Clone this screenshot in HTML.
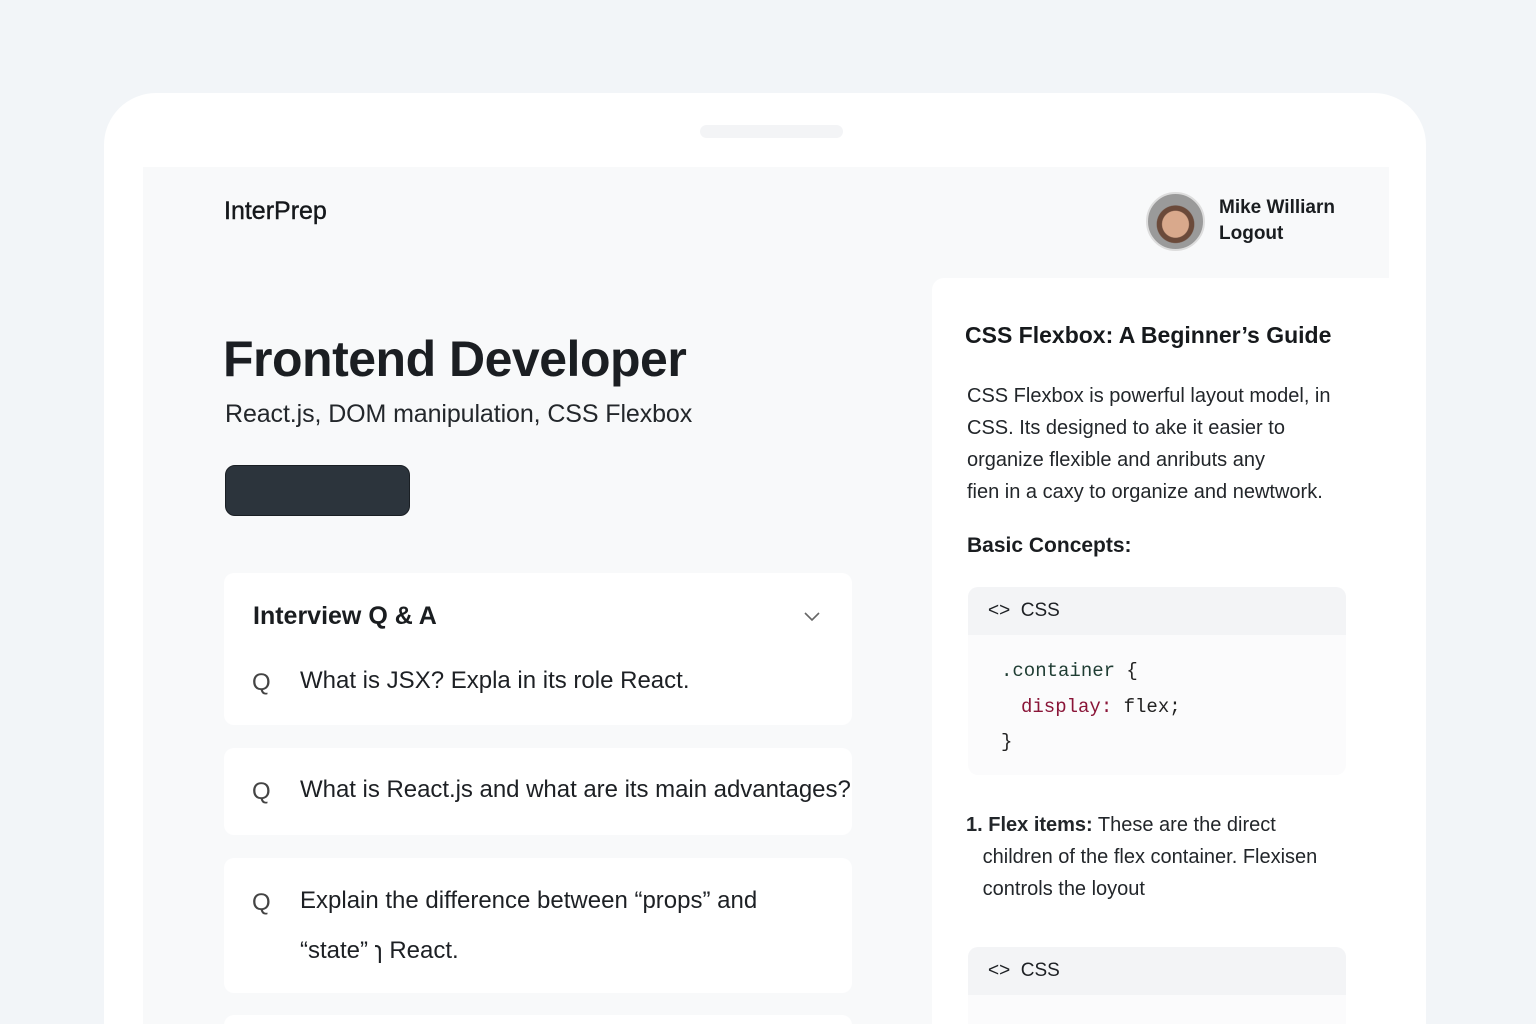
<!DOCTYPE html>
<html><head><meta charset="utf-8"><style>
*{margin:0;padding:0;box-sizing:border-box}
html,body{width:1536px;height:1024px;overflow:hidden}
body{background:#f2f5f8;font-family:"Liberation Sans",sans-serif;color:#1c1f23;position:relative}
.a{position:absolute;white-space:nowrap}
.frame{position:absolute;left:104px;top:93px;width:1322px;height:931px;background:#fff;border-radius:52px 52px 0 0}
.inner{position:absolute;left:143px;top:167px;width:1246px;height:857px;background:#f8f9fa}
.card{position:absolute;left:224px;width:628px;background:#fff;border-radius:10px}
.q{font-size:24px;color:#1d2024;letter-spacing:0}
.qi{font-size:24px;color:#444}
.code{position:absolute;left:968px;width:378px;border-radius:10px;background:#fbfbfc}
.codeh{height:48px;background:#f3f4f6;border-radius:10px 10px 0 0;font-size:19px;padding:13px 0 0 20px;color:#1d2024}
.mono{font-family:"Liberation Mono",monospace;font-size:19px}
.p{font-size:20px;line-height:32px;color:#22262a}
</style></head><body>
<div class="frame"></div>
<div class="a" style="left:700px;top:125px;width:143px;height:13px;border-radius:7px;background:#f3f4f6"></div>
<div class="inner"></div>
<div class="a" style="left:932px;top:278px;width:457px;height:746px;background:#fff;border-radius:12px 0 0 0"></div>

<div class="a" style="left:224px;top:197px;font-size:25px;color:#15181b;-webkit-text-stroke:0.4px #15181b">InterPrep</div>
<div class="a" style="left:1146px;top:192px;width:59px;height:59px;border-radius:50%;background:radial-gradient(circle at 50% 55%,#d9a98c 0 32%,#6b4a3a 34% 45%,#9a9a9a 47%);border:2px solid #ddd"></div>
<div class="a" style="left:1219px;top:195px;font-size:19px;font-weight:bold;color:#1a1d20;line-height:26px">Mike Williarn<br>Logout</div>

<div class="a" style="left:223px;top:330px;font-size:50px;font-weight:bold;color:#1b1e22;letter-spacing:-0.5px">Frontend Developer</div>
<div class="a" style="left:225px;top:400px;font-size:25px;color:#23272b;letter-spacing:-0.1px">React.js, DOM manipulation, CSS Flexbox</div>
<div class="a" style="left:225px;top:465px;width:185px;height:51px;background:#2c343c;border-radius:10px;border:1px solid #1a1f24"></div>

<div class="card" style="top:573px;height:152px"></div>
<div class="a" style="left:253px;top:602px;font-size:25px;font-weight:bold;color:#1a1d20">Interview Q &amp; A</div>
<svg class="a" style="left:803px;top:610px" width="18" height="12"><path d="M2 3l7 7 7-7" stroke="#666" stroke-width="1.6" fill="none"/></svg>
<div class="a qi" style="left:252px;top:669px">Q</div>
<div class="a q" style="left:300px;top:667px">What is JSX? Expla in its role React.</div>

<div class="card" style="top:748px;height:87px"></div>
<div class="a qi" style="left:252px;top:778px">Q</div>
<div class="a q" style="left:300px;top:776px;letter-spacing:-0.03px">What is React.js and what are its main advantages?</div>

<div class="card" style="top:858px;height:135px"></div>
<div class="a qi" style="left:252px;top:889px">Q</div>
<div class="a q" style="left:300px;top:887px">Explain the difference between “props” and</div>
<div class="a q" style="left:300px;top:937px">“state” ɿ React.</div>
<div class="card" style="top:1015px;height:20px"></div>

<div class="a" style="left:965px;top:322px;font-size:23px;font-weight:bold;color:#16191c">CSS Flexbox: A Beginner’s Guide</div>
<div class="a p" style="left:967px;top:380px">CSS Flexbox is powerful layout model, in<br>CSS. Its designed to ake it easier to<br>organize flexible and anributs any<br>fien in a caxy to organize and newtwork.</div>
<div class="a" style="left:967px;top:534px;font-size:21px;font-weight:bold;color:#1a1d20">Basic Concepts:</div>

<div class="code" style="top:587px;height:188px"><div class="codeh">&lt;&gt;&nbsp; CSS</div></div>
<div class="a mono" style="left:1001px;top:660px;color:#1f3d33">.container <span style="color:#222">{</span></div>
<div class="a mono" style="left:1021px;top:696px;color:#8a1538">display: <span style="color:#222">flex;</span></div>
<div class="a mono" style="left:1001px;top:731px;color:#222">}</div>

<div class="a p" style="left:966px;top:809px"><b>1. Flex items:</b> These are the direct<br>&nbsp;&nbsp;&nbsp;children of the flex container. Flexisen<br>&nbsp;&nbsp;&nbsp;controls the loyout</div>

<div class="code" style="top:947px;height:100px"><div class="codeh">&lt;&gt;&nbsp; CSS</div></div>
</body></html>
